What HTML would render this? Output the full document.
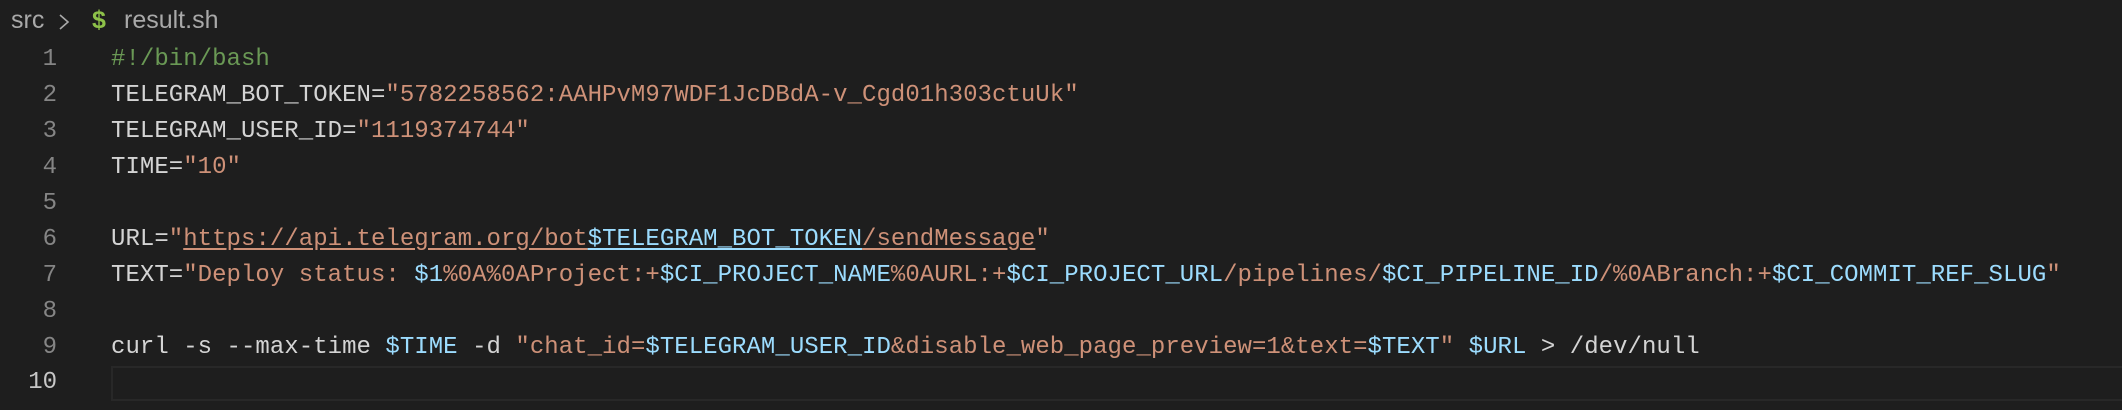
<!DOCTYPE html>
<html><head><meta charset="utf-8">
<style>
html,body{margin:0;padding:0;background:#1e1e1e;width:2122px;height:410px;overflow:hidden;}
.bc{position:absolute;top:0;left:0;height:44px;font-family:"Liberation Sans",sans-serif;font-size:25px;color:#a9a9a9;}
.bc span{position:absolute;top:6px;white-space:nowrap;}
.ln{position:absolute;left:0;width:57px;text-align:right;font-family:"Liberation Mono",monospace;font-size:24px;color:#858585;line-height:36px;}
.code{position:absolute;left:111px;font-family:"Liberation Mono",monospace;font-size:24px;letter-spacing:0.04px;color:#d4d4d4;line-height:36px;white-space:pre;}
.c{color:#6a9955}.s{color:#ce9178}.v{color:#9cdcfe}
.u{text-decoration:underline;text-underline-offset:3px;}
.cur{position:absolute;left:111px;right:0;top:366px;height:31px;border:2px solid #282828;border-right:none;}
</style></head><body>
<div class="bc">
<span style="left:11px">src</span>
<svg style="position:absolute;left:58px;top:13px" width="12" height="18" viewBox="0 0 12 18"><path d="M2 2 L10 9 L2 16" fill="none" stroke="#a9a9a9" stroke-width="1.6"/></svg>
<span style="left:92px;color:#8dc149;font-weight:bold">$</span>
<span style="left:124px">result.sh</span>
</div>
<div class="cur"></div>
<div class="ln" style="top:42px">1</div>
<div class="ln" style="top:78px">2</div>
<div class="ln" style="top:114px">3</div>
<div class="ln" style="top:150px">4</div>
<div class="ln" style="top:186px">5</div>
<div class="ln" style="top:222px">6</div>
<div class="ln" style="top:258px">7</div>
<div class="ln" style="top:294px">8</div>
<div class="ln" style="top:330px">9</div>
<div class="ln" style="top:365px;color:#c6c6c6">10</div>
<div class="code" style="top:42px"><span class="c">#!/bin/bash</span></div>
<div class="code" style="top:78px">TELEGRAM_BOT_TOKEN=<span class="s">"5782258562:AAHPvM97WDF1JcDBdA-v_Cgd01h303ctuUk"</span></div>
<div class="code" style="top:114px">TELEGRAM_USER_ID=<span class="s">"1119374744"</span></div>
<div class="code" style="top:150px">TIME=<span class="s">"10"</span></div>
<div class="code" style="top:222px">URL=<span class="s">"</span><span class="s u">https://api.telegram.org/bot</span><span class="v u">$TELEGRAM_BOT_TOKEN</span><span class="s u">/sendMessage</span><span class="s">"</span></div>
<div class="code" style="top:258px">TEXT=<span class="s">"Deploy status: </span><span class="v">$1</span><span class="s">%0A%0AProject:+</span><span class="v">$CI_PROJECT_NAME</span><span class="s">%0AURL:+</span><span class="v">$CI_PROJECT_URL</span><span class="s">/pipelines/</span><span class="v">$CI_PIPELINE_ID</span><span class="s">/%0ABranch:+</span><span class="v">$CI_COMMIT_REF_SLUG</span><span class="s">"</span></div>
<div class="code" style="top:330px">curl -s --max-time <span class="v">$TIME</span> -d <span class="s">"chat_id=</span><span class="v">$TELEGRAM_USER_ID</span><span class="s">&amp;disable_web_page_preview=1&amp;text=</span><span class="v">$TEXT</span><span class="s">"</span> <span class="v">$URL</span> &gt; /dev/null</div>
</body></html>
